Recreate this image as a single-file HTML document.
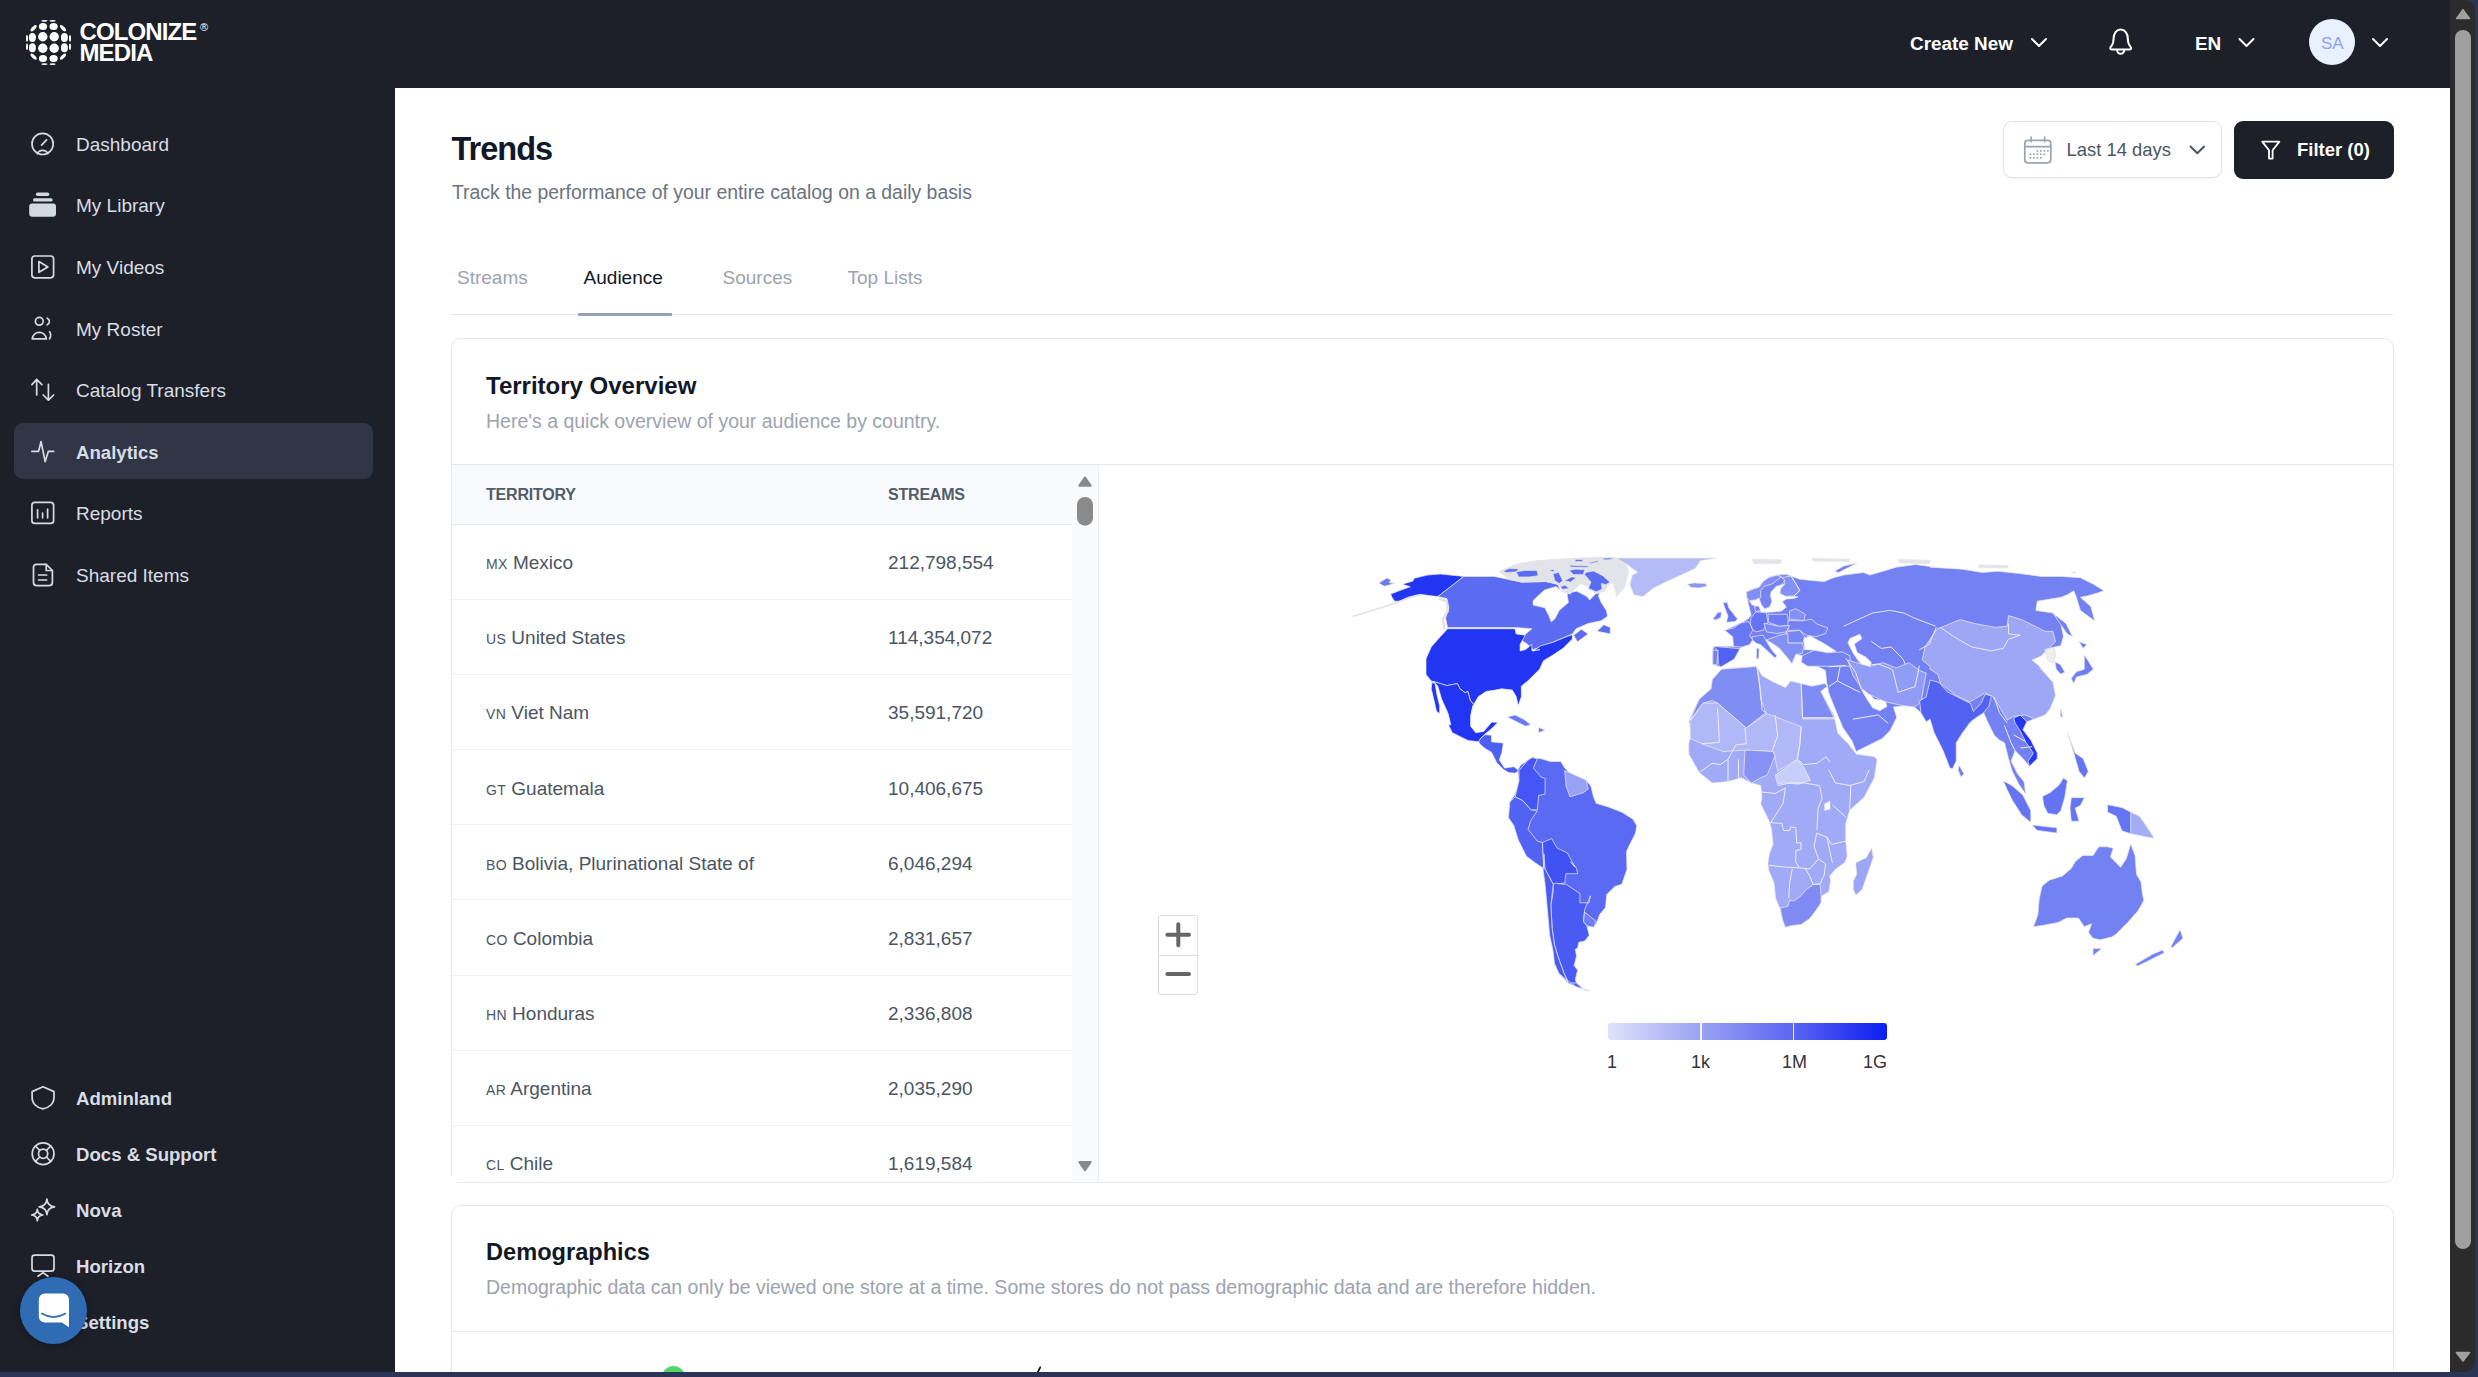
<!DOCTYPE html>
<html><head><meta charset="utf-8">
<style>
*{box-sizing:border-box;margin:0;padding:0}
html,body{width:2478px;height:1377px;overflow:hidden;background:#2a3456;font-family:"Liberation Sans",sans-serif}
.abs{position:absolute}
#app{position:absolute;left:0;top:0;width:2450px;height:1372px;background:#1d2029;overflow:hidden}
#main{position:absolute;left:395px;top:88px;width:2055px;height:1284px;background:#fff}
.nav{position:absolute;left:76px;font-size:19px;color:#d8dde6;line-height:24px;white-space:nowrap}
.nav.b{font-weight:bold;font-size:18.6px}
.ico{position:absolute;left:30px;width:26px;height:26px}
.ico svg{width:26px;height:26px;fill:none;stroke:#d6dbe3;stroke-width:1.6;stroke-linecap:round;stroke-linejoin:round}
.t{position:absolute;white-space:nowrap;line-height:1}
.tab{top:268.2px;font-size:19px;color:#9ca3af}
.tab.act{color:#111827}
.th{top:487.4px;font-size:16px;font-weight:bold;color:#515b69;letter-spacing:-0.2px}
.row{font-size:19px;color:#4b5563}
.cc{font-size:14px;letter-spacing:0.3px}
.leg{top:1053px;font-size:18px;color:#333}
</style></head><body>
<div id="app">
  <!-- logo -->
  
  <div class="t" style="left:79.5px;top:20.9px;font-size:24px;font-weight:bold;color:#fff;letter-spacing:-0.9px;line-height:21.6px">COLONIZE<br>MEDIA</div>
  <div class="t" style="left:200px;top:22px;font-size:11px;color:#fff">&#174;</div>

  
  <!-- sidebar -->
  <div class="abs" style="left:14px;top:423px;width:359px;height:56px;background:#303645;border-radius:9px"></div>
  <div class="nav" style="top:132.7px">Dashboard</div>
  <div class="nav" style="top:194.3px">My Library</div>
  <div class="nav" style="top:255.9px">My Videos</div>
  <div class="nav" style="top:317.5px">My Roster</div>
  <div class="nav" style="top:379.1px">Catalog Transfers</div>
  <div class="nav b" style="top:440.7px">Analytics</div>
  <div class="nav" style="top:502.3px">Reports</div>
  <div class="nav" style="top:563.9px">Shared Items</div>

  <div class="nav b" style="top:1086.9px">Adminland</div>
  <div class="nav b" style="top:1143.3px">Docs &amp; Support</div>
  <div class="nav b" style="top:1199.2px">Nova</div>
  <div class="nav b" style="top:1254.9px">Horizon</div>
  <div class="nav b" style="top:1310.8px">Settings</div>

<!--ICONS--><svg class="abs" style="left:0;top:0" width="395" height="1377" viewBox="0 0 395 1377">
<g fill="#fff">
<ellipse cx="44.4" cy="20.8" rx="3.2" ry="0.9"/><ellipse cx="52.6" cy="20.8" rx="3.2" ry="0.9"/>
<ellipse cx="43" cy="26.4" rx="4.1" ry="3.5"/><ellipse cx="53.6" cy="26.4" rx="4.1" ry="3.5"/>
<ellipse cx="33.6" cy="28.2" rx="4" ry="1.7" transform="rotate(-45 33.6 28.2)"/><ellipse cx="63" cy="28.2" rx="4" ry="1.7" transform="rotate(45 63 28.2)"/>
<circle cx="42.8" cy="36.8" r="4.7"/><circle cx="54.2" cy="36.8" r="4.7"/>
<ellipse cx="32.4" cy="37.4" rx="3.5" ry="4.5"/><ellipse cx="64.4" cy="37.4" rx="3.5" ry="4.5"/>
<ellipse cx="27" cy="38.4" rx="1" ry="3.3"/><ellipse cx="70" cy="38.4" rx="1" ry="3.3"/>
<circle cx="42.8" cy="48.2" r="4.7"/><circle cx="54.2" cy="48.2" r="4.7"/>
<ellipse cx="32.4" cy="47.8" rx="3.5" ry="4.5"/><ellipse cx="64.4" cy="47.8" rx="3.5" ry="4.5"/>
<ellipse cx="27" cy="46.8" rx="1" ry="3.3"/><ellipse cx="70" cy="46.8" rx="1" ry="3.3"/>
<ellipse cx="43" cy="58.4" rx="4.1" ry="3.5"/><ellipse cx="53.6" cy="58.4" rx="4.1" ry="3.5"/>
<ellipse cx="33.6" cy="56.6" rx="4" ry="1.7" transform="rotate(45 33.6 56.6)"/><ellipse cx="63" cy="56.6" rx="4" ry="1.7" transform="rotate(-45 63 56.6)"/>
<ellipse cx="44.4" cy="64.1" rx="3.2" ry="0.9"/><ellipse cx="52.6" cy="64.1" rx="3.2" ry="0.9"/>
</g>
<g fill="none" stroke="#d6dbe3" stroke-width="1.7" stroke-linecap="round" stroke-linejoin="round">
<!-- dashboard -->
<circle cx="42.6" cy="143.9" r="10.6"/>
<path d="M41.6 145.1 L46.6 139.9"/>
<path d="M37.4 153.6 A5.6 5.2 0 0 1 47.8 153.6"/>
<!-- videos -->
<rect x="31.9" y="256" width="21.7" height="21.8" rx="3"/>
<path d="M38.9 261.5 L47.9 266.9 L38.9 272.3 Z"/>
<!-- roster -->
<circle cx="39.3" cy="321.3" r="3.9"/>
<path d="M32.2 338.8 A7.2 7.6 0 0 1 46.4 338.8 Z"/>
<path d="M47.2 318.2 A3.6 3.6 0 0 1 47.2 324.8"/>
<path d="M49.6 331.6 A5.8 6.4 0 0 1 49.6 338.8"/>
<!-- transfers -->
<path d="M36.7 395 V379.6 M31.9 384.6 L36.7 379.4 L41.9 384.6"/>
<path d="M48.4 384.4 V400 M43.2 395 L48.4 400.2 L53.6 395"/>
<!-- analytics -->
<path d="M31.9 451.4 H38.6 L41 441.5 L45.2 461.6 L48.3 451.4 H53.7"/>
<!-- reports -->
<rect x="31.9" y="502.3" width="21.7" height="21.1" rx="3"/>
<path d="M37.6 509.8 V517.8 M42.6 513.2 V517.8 M47.6 509 V517.8"/>
<!-- shared -->
<path d="M36.5 564.3 H46.2 L52.4 570.5 V582.6 A3 3 0 0 1 49.4 585.6 H36.5 A3 3 0 0 1 33.5 582.6 V567.3 A3 3 0 0 1 36.5 564.3 Z"/>
<path d="M46.2 564.5 V570.5 H52.2"/>
<path d="M38.6 575 H46.6 M38.6 580 H46.6"/>
<!-- shield -->
<path d="M43 1086.8 L32.1 1091.6 V1097.5 C32.1 1103.4 36.6 1107.6 43 1108.8 C49.4 1107.6 54 1103.4 54 1097.5 V1091.6 Z"/>
<!-- lifebuoy -->
<circle cx="43.1" cy="1153.7" r="10.9"/>
<circle cx="43.1" cy="1153.7" r="4.6"/>
<path d="M35.4 1146 L39.8 1150.4 M50.8 1146 L46.4 1150.4 M35.4 1161.4 L39.8 1157 M50.8 1161.4 L46.4 1157"/>
<!-- sparkles -->
<path d="M46.9 1199.2 Q47.6 1206.2 54.6 1206.9 Q47.6 1207.6 46.9 1214.6 Q46.2 1207.6 39.2 1206.9 Q46.2 1206.2 46.9 1199.2 Z"/>
<path d="M37.3 1209.4 Q37.8 1214.5 42.9 1215 Q37.8 1215.5 37.3 1220.6 Q36.8 1215.5 31.7 1215 Q36.8 1214.5 37.3 1209.4 Z"/>
<!-- monitor -->
<rect x="32" y="1255.2" width="22" height="16" rx="2.6"/>
<path d="M38 1276.2 L43 1272.6 L48 1276.2"/>
</g>
<!-- library filled -->
<g fill="#d3d9e2">
<rect x="35.9" y="192.6" width="13.4" height="3.4" rx="1.7"/>
<rect x="33" y="198.2" width="19.6" height="3.3" rx="1.6"/>
<rect x="29.2" y="203.6" width="26.8" height="13.1" rx="3"/>
</g>
</svg>
<!--/ICONS-->
  <!-- header right -->
  <div class="t" style="left:1910px;top:34.8px;font-size:18.9px;font-weight:bold;color:#fff">Create New</div>
  <div class="t" style="left:2195px;top:34.8px;font-size:18.9px;font-weight:bold;color:#fff">EN</div>
  <div class="abs" style="left:2309px;top:19px;width:46px;height:46px;border-radius:50%;background:#e9f0fe"></div>
  <div class="t" style="left:2321px;top:35px;font-size:17px;color:#8aa3ef">SA</div>

  <!-- main -->
  <div id="main"></div>

  <div class="t" style="left:451.5px;top:133px;font-size:32.5px;font-weight:bold;color:#111827;letter-spacing:-1px">Trends</div>
  <div class="t" style="left:452px;top:182.6px;font-size:19.4px;color:#6b7280">Track the performance of your entire catalog on a daily basis</div>
  <div class="t tab" style="left:457px">Streams</div>
  <div class="t tab act" style="left:583.6px">Audience</div>
  <div class="t tab" style="left:722.5px">Sources</div>
  <div class="t tab" style="left:847.5px">Top Lists</div>
  <div class="abs" style="left:451px;top:314px;width:1942px;height:1px;background:#e5e7eb"></div>
  <div class="abs" style="left:578px;top:313px;width:94px;height:3px;background:#97a1b1;border-radius:1px"></div>
  <!-- date + filter -->
  <div class="abs" style="left:2003px;top:121px;width:219px;height:57px;border:1px solid #dfe3ea;border-radius:9px;background:#fff;box-shadow:0 1px 2px rgba(0,0,0,0.05)"></div>
  <div class="t" style="left:2066.6px;top:141.2px;font-size:18.4px;color:#4a5568">Last 14 days</div>
  <div class="abs" style="left:2234px;top:121px;width:160px;height:58px;background:#1d2029;border-radius:9px"></div>
  <div class="t" style="left:2297px;top:141.2px;font-size:18.5px;font-weight:bold;color:#fff">Filter (0)</div>
  <!-- card 1 -->
  <div class="abs" style="left:451px;top:338px;width:1943px;height:845px;border:1px solid #e5e7eb;border-radius:10px"></div>
  <div class="abs" style="left:450px;top:1168px;width:24px;height:14px;background:#fff"></div>
  <div class="abs" style="left:451px;top:1160px;width:1px;height:15.5px;background:#e5e7eb"></div>
  <div class="abs" style="left:458px;top:1182px;width:16px;height:1px;background:#e5e7eb"></div>
  <div class="t" style="left:486px;top:374.1px;font-size:24px;font-weight:bold;color:#111827">Territory Overview</div>
  <div class="t" style="left:486px;top:412.2px;font-size:19.5px;color:#9ca3af">Here's a quick overview of your audience by country.</div>
  <div class="abs" style="left:452px;top:464px;width:1941px;height:1px;background:#e5e7eb"></div>
  <div class="abs" style="left:452px;top:465px;width:646px;height:59px;background:#f9fafb"></div>
  <div class="abs" style="left:452px;top:524px;width:620px;height:1px;background:#e5e7eb"></div>
  <div class="abs" style="left:1072px;top:465px;width:26px;height:717px;background:#f9fafb"></div>
  <div class="abs" style="left:1098px;top:465px;width:1px;height:717px;background:#eceef2"></div>
  <div class="t th" style="left:486px">TERRITORY</div>
  <div class="t th" style="left:888px">STREAMS</div>
<div class="t row" style="top:553.2px;left:486px"><span class="cc">MX</span> Mexico</div><div class="t row" style="top:553.2px;left:888px">212,798,554</div>
<div class="abs" style="left:452px;top:599.0px;width:620px;height:1px;background:#eef0f3"></div>
<div class="t row" style="top:628.3px;left:486px"><span class="cc">US</span> United States</div><div class="t row" style="top:628.3px;left:888px">114,354,072</div>
<div class="abs" style="left:452px;top:674.1px;width:620px;height:1px;background:#eef0f3"></div>
<div class="t row" style="top:703.4px;left:486px"><span class="cc">VN</span> Viet Nam</div><div class="t row" style="top:703.4px;left:888px">35,591,720</div>
<div class="abs" style="left:452px;top:749.2px;width:620px;height:1px;background:#eef0f3"></div>
<div class="t row" style="top:778.5px;left:486px"><span class="cc">GT</span> Guatemala</div><div class="t row" style="top:778.5px;left:888px">10,406,675</div>
<div class="abs" style="left:452px;top:824.3px;width:620px;height:1px;background:#eef0f3"></div>
<div class="t row" style="top:853.6px;left:486px"><span class="cc">BO</span> Bolivia, Plurinational State of</div><div class="t row" style="top:853.6px;left:888px">6,046,294</div>
<div class="abs" style="left:452px;top:899.4px;width:620px;height:1px;background:#eef0f3"></div>
<div class="t row" style="top:928.7px;left:486px"><span class="cc">CO</span> Colombia</div><div class="t row" style="top:928.7px;left:888px">2,831,657</div>
<div class="abs" style="left:452px;top:974.5px;width:620px;height:1px;background:#eef0f3"></div>
<div class="t row" style="top:1003.8px;left:486px"><span class="cc">HN</span> Honduras</div><div class="t row" style="top:1003.8px;left:888px">2,336,808</div>
<div class="abs" style="left:452px;top:1049.6px;width:620px;height:1px;background:#eef0f3"></div>
<div class="t row" style="top:1078.9px;left:486px"><span class="cc">AR</span> Argentina</div><div class="t row" style="top:1078.9px;left:888px">2,035,290</div>
<div class="abs" style="left:452px;top:1124.7px;width:620px;height:1px;background:#eef0f3"></div>
<div class="t row" style="top:1154.0px;left:486px"><span class="cc">CL</span> Chile</div><div class="t row" style="top:1154.0px;left:888px">1,619,584</div>

  <!--MAP--><svg class="abs" style="left:1099px;top:465px" width="1294" height="717" viewBox="1099 465 1294 717"><path d="M1463.9,576.4L1440.4,574.0L1427.3,575.1L1414.2,578.3L1412.9,581.0L1402.4,584.2L1410.3,586.8L1401.1,590.1L1390.7,594.0L1392.0,597.3L1394.6,601.2L1399.8,601.2L1407.7,597.3L1415.5,595.3L1420.8,594.4L1427.3,595.3L1437.8,596.6Z" fill="#2135f3" stroke="#e6e6e6" stroke-width="0.7" stroke-linejoin="round"/><path d="M1378.9,582.9L1386.8,578.3L1390.7,579.6L1389.4,582.9L1394.6,582.9L1389.4,584.9L1384.1,586.2Z" fill="#6a78f2" stroke="#e6e6e6" stroke-width="0.7" stroke-linejoin="round"/><polyline points="1352.8,616.3 1368.5,611.7 1389.4,605.1 1407.7,598.6 1420.8,594.4" fill="none" stroke="#e3e3e3" stroke-width="1.6"/><path d="M1437.8,596.6L1463.9,576.4L1494.0,576.4L1509.1,579.5L1522.0,582.1L1545.8,581.5L1557.5,584.1L1560.7,591.2L1570.4,592.4L1576.8,591.2L1586.5,596.3L1589.7,600.0L1601.1,588.1L1598.5,596.0L1601.1,602.5L1606.3,610.4L1607.6,616.3L1601.1,620.8L1588.0,623.5L1576.2,628.7L1572.3,633.9L1552.7,642.4L1533.1,649.6L1527.8,644.4L1520.0,639.1L1531.9,628.7L1514.9,627.6L1447.6,627.6L1445.6,618.2L1448.9,607.8L1446.9,598.6Z" fill="#5b6cf2" stroke="#e6e6e6" stroke-width="0.7" stroke-linejoin="round"/><path d="M1499.4,571.5L1514.9,564.7L1532.9,561.1L1551.0,559.8L1570.4,558.6L1596.2,557.6L1615.6,557.6L1624.0,560.2L1628.5,571.1L1624.6,587.3L1616.9,596.3L1613.0,582.1L1608.5,585.3L1604.6,591.2L1596.2,593.7L1586.5,586.0L1580.7,583.4L1570.4,593.7L1563.9,591.2L1557.5,584.1L1545.8,581.5L1522.0,582.1L1509.1,579.5Z" fill="#e3e4ea" stroke="#e6e6e6" stroke-width="1.0" stroke-linejoin="round"/><path d="M1503.2,571.1L1509.1,568.6L1518.7,568.9L1516.2,571.8L1505.8,572.4Z" fill="#5b6cf2" stroke="#e6e6e6" stroke-width="0.6" stroke-linejoin="round"/><path d="M1516.2,571.8L1525.2,570.5L1536.8,570.5L1538.1,575.7L1529.1,576.9L1518.7,576.9Z" fill="#5b6cf2" stroke="#e6e6e6" stroke-width="0.6" stroke-linejoin="round"/><path d="M1553.0,573.7L1558.8,572.4L1562.6,580.8L1559.4,583.4L1554.9,580.8Z" fill="#5b6cf2" stroke="#e6e6e6" stroke-width="0.6" stroke-linejoin="round"/><path d="M1560.7,586.6L1565.2,585.3L1569.1,588.6L1562.0,589.2Z" fill="#5b6cf2" stroke="#e6e6e6" stroke-width="0.6" stroke-linejoin="round"/><path d="M1569.1,570.5L1575.5,569.2L1584.6,569.8L1583.3,574.4L1573.6,574.4Z" fill="#5b6cf2" stroke="#e6e6e6" stroke-width="0.6" stroke-linejoin="round"/><path d="M1585.9,572.4L1593.6,571.1L1602.7,575.7L1609.8,582.1L1605.9,584.7L1601.4,583.4L1602.0,589.2L1596.2,591.8L1588.5,588.6L1591.0,582.1L1584.6,574.4Z" fill="#5b6cf2" stroke="#e6e6e6" stroke-width="0.6" stroke-linejoin="round"/><path d="M1564.6,580.8L1571.7,576.9L1576.2,577.6L1570.4,582.1Z" fill="#5b6cf2" stroke="#e6e6e6" stroke-width="0.6" stroke-linejoin="round"/><path d="M1574.9,559.5L1583.3,559.8L1582.0,561.5L1575.5,561.5Z" fill="#5b6cf2" stroke="#e6e6e6" stroke-width="0.6" stroke-linejoin="round"/><path d="M1589.1,562.7L1598.8,560.5L1597.5,562.1L1589.7,563.7Z" fill="#5b6cf2" stroke="#e6e6e6" stroke-width="0.6" stroke-linejoin="round"/><path d="M1602.7,558.2L1614.3,557.9L1609.1,559.8L1604.0,559.8Z" fill="#5b6cf2" stroke="#e6e6e6" stroke-width="0.6" stroke-linejoin="round"/><path d="M1569.7,565.3L1588.5,566.0L1587.2,567.3L1570.4,566.9Z" fill="#5b6cf2" stroke="#e6e6e6" stroke-width="0.6" stroke-linejoin="round"/><path d="M1549.1,570.5L1554.2,569.2L1553.6,571.8Z" fill="#5b6cf2" stroke="#e6e6e6" stroke-width="0.6" stroke-linejoin="round"/><polyline points="1438.9,598.4 1446.9,601.7 1447.8,611.3 1442.9,618.6 1444.5,629.9" fill="none" stroke="#e2e2e2" stroke-width="2.2"/><path d="M1533.1,601.2L1533.6,600.0L1544.6,589.9L1556.2,586.6L1561.3,591.2L1570.4,593.7L1567.1,593.4L1568.4,602.5L1559.2,610.4L1555.3,618.2L1551.4,622.1L1548.8,615.6L1544.8,607.8L1533.1,605.1Z" fill="#ffffff" stroke="#e8e8e8" stroke-width="0.7" stroke-linejoin="round"/><path d="M1597.1,631.3L1603.7,624.8L1610.2,627.4L1610.2,633.9L1603.7,632.6Z" fill="#5b6cf2" stroke="#e6e6e6" stroke-width="0.7" stroke-linejoin="round"/><path d="M1573.6,635.2L1581.5,629.3L1588.0,633.9L1577.5,641.8Z" fill="#5b6cf2" stroke="#e6e6e6" stroke-width="0.7" stroke-linejoin="round"/><path d="M1447.6,628.7L1514.9,628.7L1516.2,633.9L1525.4,635.2L1520.1,644.4L1520.1,650.9L1525.4,649.6L1531.9,644.4L1531.9,650.9L1540.0,649.6L1533.1,650.9L1540.9,645.7L1552.7,642.4L1563.1,638.1L1572.3,634.6L1572.3,639.1L1563.1,648.3L1551.4,656.1L1543.5,660.7L1539.6,669.2L1527.8,681.0L1521.3,686.2L1521.4,696.7L1518.2,705.8L1516.2,696.7L1512.3,690.1L1501.8,688.8L1495.3,690.1L1486.1,691.4L1478.3,696.7L1473.7,704.5L1470.4,700.6L1467.8,691.4L1465.2,692.8L1460.0,688.8L1457.4,683.6L1446.9,685.6L1440.4,683.6L1433.8,681.6L1431.2,681.0L1426.0,674.4L1426.0,658.8L1431.2,647.0L1440.4,636.5Z" fill="#2135f3" stroke="#f0f0f0" stroke-width="0.7" stroke-linejoin="round"/><path d="M1433.8,681.6L1440.4,683.6L1446.9,685.6L1457.4,683.6L1460.0,688.8L1465.2,692.8L1467.8,691.4L1470.4,700.6L1473.7,704.5L1471.7,712.4L1473.2,705.2L1470.6,715.7L1470.6,726.2L1475.8,732.7L1483.7,731.4L1491.5,722.2L1498.1,722.2L1491.5,728.8L1485.0,734.0L1481.1,737.9L1478.5,741.8L1468.0,740.5L1452.3,732.7L1448.4,724.8L1450.8,725.0L1448.2,713.7L1441.7,699.3L1437.8,686.2Z" fill="#2135f3" stroke="#f0f0f0" stroke-width="0.7" stroke-linejoin="round"/><path d="M1431.9,682.3L1435.1,683.6L1437.1,695.4L1439.7,705.8L1439.7,713.7L1436.4,711.1L1433.8,699.3L1431.2,688.8Z" fill="#2135f3" stroke="#f0f0f0" stroke-width="0.7" stroke-linejoin="round"/><path d="M1478.5,741.8L1481.1,737.9L1485.0,734.6L1491.5,735.3L1491.5,741.8L1503.3,743.1L1502.0,752.3L1499.4,760.1L1504.6,768.0L1513.8,766.7L1519.0,770.6L1515.1,773.2L1508.5,772.6L1503.3,769.3L1496.8,762.8L1491.5,752.3L1485.0,748.4L1480.4,744.5Z" fill="#4d5ef3" stroke="#f0f0f0" stroke-width="0.7" stroke-linejoin="round"/><path d="M1507.2,717.0L1515.1,715.0L1524.2,719.6L1530.8,724.8L1525.5,726.2L1515.1,720.9Z" fill="#6a79f2" stroke="#e6e6e6" stroke-width="0.7" stroke-linejoin="round"/><path d="M1538.6,727.5L1545.1,730.1L1538.6,732.7Z" fill="#6a79f2" stroke="#e6e6e6" stroke-width="0.7" stroke-linejoin="round"/><path d="M1616.8,558.1L1716.1,558.1L1700.4,560.7L1695.2,568.5L1680.8,575.1L1663.8,582.9L1653.4,588.1L1642.9,596.6L1633.8,594.7L1629.8,584.2L1632.4,575.1L1637.7,572.5L1627.2,564.6Z" fill="#b3bcf7" stroke="#e6e6e6" stroke-width="0.7" stroke-linejoin="round"/><path d="M1687.4,584.2L1693.9,582.9L1705.7,583.6L1707.0,586.2L1699.1,588.1L1691.3,587.5Z" fill="#8a97f4" stroke="#e6e6e6" stroke-width="0.7" stroke-linejoin="round"/><path d="M1517.7,770.6L1520.3,765.4L1528.1,760.1L1532.1,757.5L1541.2,758.8L1550.4,761.5L1560.8,761.5L1564.7,768.0L1570.0,773.2L1576.5,778.5L1585.7,779.8L1590.9,786.3L1593.5,796.8L1596.1,803.3L1609.2,807.2L1622.3,812.4L1632.7,819.0L1636.7,825.5L1635.4,833.4L1630.1,843.8L1626.4,851.6L1627.0,869.1L1621.8,884.2L1614.8,886.5L1606.7,894.6L1605.5,907.4L1599.7,914.4L1596.2,923.7L1593.9,927.2L1586.9,926.0L1589.2,935.3L1584.6,941.1L1578.8,942.3L1577.6,948.1L1575.3,949.2L1576.5,956.2L1574.1,965.5L1577.6,970.2L1575.3,979.5L1576.5,982.9L1584.6,989.9L1590.4,991.1L1575.3,986.4L1568.3,982.9L1559.0,973.6L1554.4,963.2L1553.2,951.6L1549.7,935.3L1547.4,909.7L1545.1,884.2L1542.8,867.9L1535.8,863.2L1526.5,856.3L1518.3,840.0L1513.8,825.5L1508.5,817.7L1509.8,802.0L1515.1,794.1L1519.0,781.1Z" fill="#5a6af3" stroke="#e6e6e6" stroke-width="0.7" stroke-linejoin="round"/><path d="M1519.0,770.6L1528.1,760.1L1532.1,757.5L1537.3,758.8L1533.4,768.0L1541.2,777.1L1545.1,778.5L1545.1,794.1L1538.6,795.4L1537.3,809.8L1530.8,809.8L1522.9,800.7L1515.1,796.8L1519.0,781.1Z" fill="#4457f4" stroke="#f0f0f0" stroke-width="0.7" stroke-linejoin="round"/><path d="M1515.1,796.8L1522.9,800.7L1530.8,809.8L1537.3,811.1L1530.8,820.3L1528.1,829.4L1537.3,841.2L1542.5,842.5L1543.8,867.4L1542.8,867.9L1535.8,863.2L1526.5,856.3L1518.3,840.0L1513.8,825.5L1508.5,817.7L1509.8,802.0Z" fill="#5262f3" stroke="#f0f0f0" stroke-width="0.7" stroke-linejoin="round"/><path d="M1542.5,842.5L1551.7,838.6L1556.9,847.8L1567.4,853.0L1575.2,867.4L1570.6,862.1L1576.5,867.9L1577.6,873.7L1566.0,873.7L1564.8,883.0L1553.2,884.2L1545.1,869.1L1543.9,853.9L1543.8,867.4Z" fill="#4152f4" stroke="#f0f0f0" stroke-width="0.7" stroke-linejoin="round"/><path d="M1553.2,884.2L1555.5,883.0L1561.3,884.2L1566.0,884.2L1579.9,893.5L1579.9,902.8L1589.2,902.8L1590.4,895.8L1584.6,909.7L1583.4,921.3L1586.9,926.0L1589.2,935.3L1584.6,941.1L1578.8,942.3L1577.6,948.1L1575.3,949.2L1576.5,956.2L1574.1,965.5L1577.6,970.2L1575.3,979.5L1576.5,982.9L1568.3,982.9L1563.7,972.5L1557.9,956.2L1554.4,944.6L1552.1,928.3L1550.9,905.1L1553.2,892.3Z" fill="#4a5bf4" stroke="#f0f0f0" stroke-width="0.7" stroke-linejoin="round"/><path d="M1545.1,869.1L1553.2,884.2L1550.9,905.1L1552.1,928.3L1554.4,944.6L1557.9,956.2L1563.7,972.5L1568.3,982.9L1575.3,986.4L1559.0,973.6L1554.4,963.2L1553.2,951.6L1549.7,935.3L1547.4,909.7L1545.1,884.2L1542.8,867.9Z" fill="#4a5bf4" stroke="#f0f0f0" stroke-width="0.7" stroke-linejoin="round"/><path d="M1584.6,912.1L1596.2,921.3L1593.9,927.2L1586.9,926.0L1583.4,921.3Z" fill="#7080f3" stroke="#f0f0f0" stroke-width="0.7" stroke-linejoin="round"/><path d="M1564.7,770.6L1585.7,779.8L1588.3,788.9L1583.1,792.8L1570.0,796.8L1566.1,786.3Z" fill="#97a2f5" stroke="#f0f0f0" stroke-width="0.7" stroke-linejoin="round"/><path d="M1824.2,581.6L1833.4,577.7L1843.8,575.1L1863.4,572.5L1870.0,575.1L1883.1,571.2L1896.1,567.2L1915.7,564.6L1935.4,567.2L1930.0,567.2L1962.7,569.2L1982.3,572.5L1998.0,571.2L2021.5,573.8L2041.1,576.4L2060.8,576.4L2080.4,577.7L2093.4,584.2L2103.9,590.8L2096.1,593.4L2086.9,596.0L2080.4,597.3L2090.8,606.5L2094.7,620.8L2080.4,610.4L2076.4,597.3L2073.8,590.8L2067.3,594.7L2060.8,597.3L2037.2,601.2L2035.9,610.4L2052.9,613.0L2060.8,623.5L2063.4,636.5L2060.8,645.7L2054.2,647.0L2055.5,656.1L2052.9,662.7L2047.7,660.1L2045.1,649.6L2041.1,656.1L2032.0,660.1L2038.5,665.3L2042.4,670.5L2052.9,682.3L2055.5,695.4L2050.3,708.4L2045.1,715.0L2034.6,718.9L2026.8,721.8L2022.9,729.7L2030.8,740.1L2037.3,753.2L2037.3,758.5L2029.4,766.3L2022.9,758.5L2015.1,750.6L2011.1,761.1L2017.7,774.1L2024.2,782.0L2025.5,793.8L2019.0,784.6L2012.4,771.5L2008.5,758.5L2004.6,742.8L1999.4,740.1L1994.1,734.9L1987.6,721.8L1983.7,712.7L1975.8,717.9L1970.6,721.8L1962.8,732.3L1956.2,742.8L1956.2,761.1L1952.3,768.9L1949.7,767.6L1943.1,750.6L1934.0,732.3L1930.1,719.2L1926.2,721.8L1920.9,712.7L1914.4,707.1L1904.0,705.8L1893.5,707.1L1896.7,717.5L1890.1,730.6L1882.3,738.5L1866.6,746.3L1856.1,751.5L1852.2,741.1L1843.1,728.0L1836.5,712.3L1828.7,692.7L1827.4,684.8L1826.8,683.6L1825.5,670.5L1817.4,666.5L1807.8,666.2L1801.4,662.2L1802.2,655.8L1795.8,654.2L1791.9,663.8L1787.9,658.2L1779.1,647.9L1771.9,643.1L1766.3,639.9L1771.9,650.3L1776.7,655.8L1775.1,658.2L1768.7,651.9L1760.7,644.7L1755.9,643.1L1752.7,639.9L1749.5,644.7L1741.5,647.1L1739.9,648.7L1734.3,659.0L1720.8,667.0L1712.8,664.6L1712.8,650.3L1713.6,646.3L1733.5,646.3L1732.7,636.7L1724.8,630.3L1731.9,627.1L1740.7,623.1L1747.9,619.1L1751.1,615.1L1747.1,598.3L1746.3,591.9L1751.9,589.6L1759.1,587.2L1763.1,581.6L1768.7,577.6L1776.7,575.2L1786.3,574.4L1791.1,576.0L1799.8,579.2L1814.2,580.8Z" fill="#7381f3" stroke="#e6e6e6" stroke-width="0.7" stroke-linejoin="round"/><path d="M1834.7,571.2L1843.8,565.9L1856.9,563.3L1846.4,568.5L1838.6,572.5Z" fill="#7381f3" stroke="#e0e0e0" stroke-width="0.7" stroke-linejoin="round"/><path d="M1752.3,559.2L1782.0,559.9L1780.6,563.4L1753.7,563.7Z" fill="#e2e3ea" stroke="#e6e6e6" stroke-width="0.8" stroke-linejoin="round"/><path d="M1811.8,558.5L1850.0,559.2L1848.6,561.4L1813.2,561.0Z" fill="#e2e3ea" stroke="#e6e6e6" stroke-width="0.8" stroke-linejoin="round"/><path d="M1898.2,559.2L1930.7,560.6L1929.3,563.7L1899.6,562.8Z" fill="#e2e3ea" stroke="#e6e6e6" stroke-width="0.8" stroke-linejoin="round"/><path d="M1978.4,564.9L2008.5,565.7L2007.1,568.0L1979.7,567.6Z" fill="#e2e3ea" stroke="#e6e6e6" stroke-width="0.8" stroke-linejoin="round"/><path d="M2071.2,571.8L2075.8,572.2L2074.5,573.8Z" fill="#e2e3ea" stroke="#e6e6e6" stroke-width="0.8" stroke-linejoin="round"/><path d="M1749.5,600.7L1755.1,599.9L1759.1,598.3L1761.5,604.7L1764.7,608.7L1769.5,607.1L1771.9,601.5L1770.3,595.9L1771.1,591.9L1776.7,586.4L1784.7,584.0L1780.7,588.8L1779.9,593.5L1785.5,596.3L1798.2,596.7L1794.2,598.3L1786.3,599.1L1782.3,601.5L1786.3,607.1L1781.5,611.1L1767.9,612.3L1761.5,611.9L1759.1,609.9L1755.9,606.3L1751.9,604.7Z" fill="#ffffff" stroke="#ececec" stroke-width="0.7" stroke-linejoin="round"/><path d="M1803.8,638.3L1810.2,635.9L1815.8,639.1L1824.6,643.9L1835.8,651.1L1827.8,652.7L1815.8,650.3L1804.6,649.5Z" fill="#ffffff" stroke="#ececec" stroke-width="0.7" stroke-linejoin="round"/><path d="M1850.0,638.5L1859.9,634.2L1862.0,638.5L1854.3,644.1L1857.1,652.6L1865.6,656.9L1871.3,662.5L1869.8,666.8L1864.2,666.8L1858.5,661.1L1852.8,652.6L1847.9,642.7Z" fill="#ffffff" stroke="#ececec" stroke-width="0.7" stroke-linejoin="round"/><path d="M1861.3,689.4L1868.4,692.3L1874.1,699.3L1885.4,700.8L1886.8,706.4L1879.7,710.7L1872.7,707.8L1867.0,699.3Z" fill="#ffffff" stroke="#ececec" stroke-width="0.7" stroke-linejoin="round"/><path d="M1747.1,598.3L1746.3,591.9L1751.9,589.6L1759.1,587.2L1763.1,581.6L1768.7,577.6L1776.7,575.2L1786.3,574.4L1791.1,576.0L1784.7,580.0L1781.5,584.8L1775.9,586.4L1771.1,591.9L1770.3,595.9L1771.9,601.5L1769.5,607.1L1764.7,608.7L1761.5,604.7L1759.1,598.3L1755.1,599.9L1749.5,600.7Z" fill="#7684f3" stroke="#e8e8e8" stroke-width="0.7" stroke-linejoin="round"/><path d="M1747.1,598.3L1746.3,591.9L1751.9,589.6L1759.1,587.2L1763.1,581.6L1768.7,577.6L1776.7,575.2L1781.5,576.8L1771.9,584.0L1763.9,586.4L1760.7,590.4L1760.7,597.5L1759.1,598.3L1755.1,599.9L1749.5,600.7Z" fill="#838ff4" stroke="#f0f0f0" stroke-width="0.7" stroke-linejoin="round"/><path d="M1781.5,577.6L1791.1,576.0L1795.0,582.4L1799.8,590.4L1794.2,595.9L1785.5,596.3L1779.9,593.5L1780.7,588.8L1784.7,584.0L1784.7,580.0Z" fill="#8390f4" stroke="#f0f0f0" stroke-width="0.7" stroke-linejoin="round"/><path d="M1754.3,607.1L1758.3,605.5L1760.7,610.3L1755.9,611.9Z" fill="#6f7ef2" stroke="#f0f0f0" stroke-width="0.7" stroke-linejoin="round"/><path d="M1723.2,603.1L1727.2,602.3L1728.8,607.9L1737.5,619.1L1735.1,621.5L1726.4,622.3L1728.0,615.9L1724.8,607.9Z" fill="#6676f2" stroke="#e6e6e6" stroke-width="0.7" stroke-linejoin="round"/><path d="M1712.8,619.1L1717.6,612.7L1721.6,611.9L1720.8,617.5L1716.0,619.9Z" fill="#7080f3" stroke="#e6e6e6" stroke-width="0.7" stroke-linejoin="round"/><path d="M1724.8,630.3L1733.5,627.9L1740.7,623.1L1747.9,621.5L1750.3,623.9L1752.7,630.3L1749.5,635.9L1752.7,639.9L1749.5,644.7L1741.5,647.1L1733.5,646.3L1732.7,636.7Z" fill="#6878f2" stroke="#f0f0f0" stroke-width="0.7" stroke-linejoin="round"/><path d="M1751.1,617.5L1755.9,611.9L1766.3,612.7L1767.9,622.3L1765.5,626.3L1763.1,630.3L1755.9,631.9L1752.7,629.5L1750.3,623.9Z" fill="#6474f2" stroke="#f0f0f0" stroke-width="0.7" stroke-linejoin="round"/><path d="M1767.9,614.3L1787.1,614.3L1789.5,625.5L1779.1,626.3L1768.7,622.3Z" fill="#6d7cf2" stroke="#f0f0f0" stroke-width="0.7" stroke-linejoin="round"/><path d="M1789.5,611.1L1795.8,608.7L1805.4,614.3L1803.8,620.7L1789.5,619.1Z" fill="#8390f4" stroke="#f0f0f0" stroke-width="0.7" stroke-linejoin="round"/><path d="M1787.9,620.7L1803.8,620.7L1811.8,619.1L1816.6,623.9L1827.8,627.9L1825.4,633.5L1815.8,636.7L1806.2,635.1L1799.8,630.3L1787.9,630.3Z" fill="#7381f3" stroke="#f0f0f0" stroke-width="0.7" stroke-linejoin="round"/><path d="M1786.3,631.9L1799.8,630.3L1804.6,636.7L1803.0,643.1L1787.9,643.1Z" fill="#7886f3" stroke="#f0f0f0" stroke-width="0.7" stroke-linejoin="round"/><path d="M1766.3,639.9L1779.9,635.1L1787.9,633.5L1787.9,643.1L1802.2,643.1L1803.8,647.9L1802.2,653.5L1795.8,654.2L1791.9,663.8L1787.9,658.2L1779.1,647.9L1771.9,643.1Z" fill="#8390f4" stroke="#f0f0f0" stroke-width="0.7" stroke-linejoin="round"/><path d="M1763.9,623.1L1779.1,626.3L1789.5,625.5L1786.3,631.9L1776.7,633.5L1766.3,631.9Z" fill="#7d8bf3" stroke="#f0f0f0" stroke-width="0.7" stroke-linejoin="round"/><path d="M1751.9,636.7L1763.1,635.1L1765.5,639.9L1771.9,650.3L1776.7,655.8L1775.1,658.2L1768.7,651.9L1760.7,644.7L1755.9,643.1L1752.7,639.9Z" fill="#6e7df2" stroke="#f0f0f0" stroke-width="0.7" stroke-linejoin="round"/><path d="M1713.6,646.3L1739.9,648.7L1734.3,659.0L1720.8,667.0L1718.4,664.6L1717.6,650.3Z" fill="#5262f2" stroke="#f0f0f0" stroke-width="0.7" stroke-linejoin="round"/><path d="M1712.8,650.3L1718.0,650.3L1716.8,664.6L1712.8,664.6Z" fill="#7080f3" stroke="#f0f0f0" stroke-width="0.7" stroke-linejoin="round"/><path d="M1756.7,647.9L1759.1,648.7L1758.7,659.0L1756.3,658.2Z" fill="#6e7df2" stroke="#e6e6e6" stroke-width="0.7" stroke-linejoin="round"/><path d="M1802.2,655.8L1814.2,650.3L1827.8,652.7L1842.2,651.9L1850.0,655.8L1850.0,666.2L1827.8,666.2L1807.8,666.2L1801.4,662.2Z" fill="#7381f3" stroke="#f0f0f0" stroke-width="0.7" stroke-linejoin="round"/><path d="M1847.8,660.1L1870.0,666.6L1883.1,662.7L1896.1,667.9L1909.2,662.7L1919.7,670.5L1926.2,673.1L1921.0,701.9L1914.4,707.1L1904.0,705.8L1885.7,701.9L1868.7,694.1L1862.1,688.8L1853.0,675.8Z" fill="#909cf5" stroke="#f0f0f0" stroke-width="0.7" stroke-linejoin="round"/><polyline points="1843.8,626.1 1872.6,613.0 1889.6,610.4 1904.0,613.0 1914.4,618.2 1935.4,626.1" fill="none" stroke="#f0f0f0" stroke-width="0.9"/><path d="M1937.8,628.7L1960.1,619.5L1974.5,623.5L1995.4,627.4L2007.1,626.1L2008.5,615.6L2021.5,619.5L2045.1,631.3L2052.9,631.3L2055.5,641.8L2047.7,649.6L2041.1,656.1L2032.0,660.1L2038.5,665.3L2042.4,670.5L2052.9,682.3L2055.5,695.4L2050.3,708.4L2045.1,715.0L2034.6,718.9L2025.4,715.0L2013.7,716.3L2007.1,720.2L1998.0,704.5L1992.8,696.7L1984.9,692.8L1974.5,699.3L1969.2,701.9L1956.2,695.4L1940.5,683.6L1937.8,674.4L1930.0,669.2L1930.1,666.6L1922.3,660.1L1924.9,647.0L1935.4,631.3Z" fill="#9da7f6" stroke="#f0f0f0" stroke-width="0.7" stroke-linejoin="round"/><polyline points="1940.5,627.4 1953.5,636.5 1971.8,647.0 1991.5,650.9 2003.2,648.3 2008.5,639.1 2020.2,635.2 2008.5,633.9 2008.5,623.5" fill="none" stroke="#f0f0f0" stroke-width="0.9"/><path d="M2045.1,649.6L2054.2,647.0L2055.5,656.1L2052.9,662.7L2047.7,660.1Z" fill="#eeeeee" stroke="#e4e4e4" stroke-width="0.7" stroke-linejoin="round"/><path d="M2054.9,661.7L2060.5,664.8L2064.8,672.2L2060.5,674.1L2056.2,669.1Z" fill="#6f7ef2" stroke="#e4e4e4" stroke-width="0.7" stroke-linejoin="round"/><path d="M2084.3,654.8L2093.4,669.2L2086.9,674.4L2076.4,677.1L2073.8,683.6L2071.2,678.4L2076.4,671.8L2084.3,669.2Z" fill="#6f7ef2" stroke="#e6e6e6" stroke-width="0.7" stroke-linejoin="round"/><path d="M2079.1,641.8L2086.9,644.4L2083.0,648.3Z" fill="#6f7ef2" stroke="#e6e6e6" stroke-width="0.7" stroke-linejoin="round"/><path d="M2054.2,614.3L2066.0,623.5L2072.5,636.5L2067.3,633.9L2058.1,620.8Z" fill="#7381f3" stroke="#e6e6e6" stroke-width="0.7" stroke-linejoin="round"/><path d="M2060.8,708.4L2062.7,717.6L2060.1,716.3Z" fill="#8a97f4" stroke="#e6e6e6" stroke-width="0.7" stroke-linejoin="round"/><path d="M1930.1,680.0L1939.2,682.6L1947.1,691.8L1970.6,703.5L1973.2,711.4L1981.1,703.5L1985.0,694.4L1991.5,695.7L1988.9,706.2L1983.7,712.7L1975.8,717.9L1970.6,721.8L1962.8,732.3L1956.2,742.8L1956.2,761.1L1952.3,768.9L1949.7,767.6L1943.1,750.6L1934.0,732.3L1930.1,719.2L1926.2,721.8L1920.9,712.7L1919.6,700.9L1926.2,697.0Z" fill="#5263f2" stroke="#f0f0f0" stroke-width="0.7" stroke-linejoin="round"/><path d="M1958.8,765.0L1964.1,774.1L1960.8,776.8L1958.2,770.2Z" fill="#7080f3" stroke="#e6e6e6" stroke-width="0.7" stroke-linejoin="round"/><path d="M2013.8,717.9L2020.3,715.3L2026.8,721.8L2022.9,729.7L2030.8,740.1L2037.3,753.2L2037.3,758.5L2029.4,766.3L2028.1,761.1L2033.4,753.2L2025.5,741.5L2020.3,731.0L2015.1,723.1Z" fill="#2337f5" stroke="#f0f0f0" stroke-width="0.7" stroke-linejoin="round"/><path d="M2003.3,780.7L2012.4,785.9L2022.9,795.1L2030.8,810.8L2030.8,822.5L2021.6,814.7L2012.4,800.3L2007.2,789.8Z" fill="#6474f2" stroke="#e6e6e6" stroke-width="0.7" stroke-linejoin="round"/><path d="M2032.1,825.1L2056.9,827.8L2056.9,833.0L2037.3,830.4Z" fill="#6474f2" stroke="#e6e6e6" stroke-width="0.7" stroke-linejoin="round"/><path d="M2042.5,796.4L2050.4,792.4L2059.5,784.6L2063.4,778.1L2067.4,780.7L2064.7,797.7L2060.8,810.8L2056.9,814.7L2047.8,813.4L2043.8,805.5Z" fill="#6474f2" stroke="#e6e6e6" stroke-width="0.7" stroke-linejoin="round"/><path d="M2071.3,797.7L2084.4,797.7L2080.4,805.5L2075.2,808.1L2079.1,821.2L2071.3,821.2L2070.0,808.1Z" fill="#6474f2" stroke="#e6e6e6" stroke-width="0.7" stroke-linejoin="round"/><path d="M2067.4,732.3L2071.3,742.8L2075.2,753.2L2083.1,758.5L2088.3,771.5L2084.4,778.1L2079.1,771.5L2073.9,753.2Z" fill="#6474f2" stroke="#e6e6e6" stroke-width="0.7" stroke-linejoin="round"/><path d="M2107.5,804.7L2122.0,807.6L2130.7,812.0L2139.5,816.3L2146.7,826.5L2154.0,838.1L2145.3,836.7L2130.7,833.7L2122.0,830.8L2116.2,816.3L2107.5,812.0Z" fill="#6474f2" stroke="#e6e6e6" stroke-width="0.7" stroke-linejoin="round"/><path d="M2130.7,812.0L2139.5,816.3L2146.7,826.5L2154.0,838.1L2145.3,836.7L2130.7,833.7Z" fill="#a3adf6" stroke="#f0f0f0" stroke-width="0.7" stroke-linejoin="round"/><path d="M1721.5,669.2L1733.2,667.8L1756.8,666.5L1762.0,675.7L1773.8,682.2L1785.5,687.5L1790.8,680.9L1801.2,683.5L1811.7,686.2L1824.7,683.5L1827.4,686.2L1820.8,691.4L1833.9,714.9L1837.8,733.2L1848.3,743.7L1856.1,754.1L1874.4,756.8L1877.1,759.4L1874.4,777.7L1864.0,797.3L1849.6,810.4L1845.7,823.4L1845.7,840.0L1847.2,856.6L1844.6,862.7L1835.9,868.8L1829.8,875.8L1830.6,881.0L1828.9,891.5L1821.9,895.8L1821.0,902.8L1815.8,910.6L1809.7,918.5L1801.0,924.6L1792.3,925.4L1785.3,927.2L1782.7,920.2L1780.1,908.9L1775.7,898.4L1774.0,882.7L1768.8,870.5L1767.9,863.6L1769.6,853.1L1773.1,844.4L1771.4,828.7L1768.8,820.0L1767.2,816.9L1760.7,803.8L1762.0,797.3L1760.7,785.5L1751.5,782.9L1741.1,777.7L1728.0,781.6L1712.3,782.9L1699.2,772.4L1688.8,754.1L1688.8,743.7L1691.4,733.2L1688.8,721.5L1692.7,712.3L1699.2,699.2L1711.0,688.8L1712.3,679.6Z" fill="#a0aaf6" stroke="#e6e6e6" stroke-width="0.7" stroke-linejoin="round"/><path d="M1721.5,669.2L1756.8,666.5L1759.4,680.9L1760.7,699.2L1765.9,712.3L1746.3,728.0L1717.5,703.1L1712.3,700.5L1703.1,703.1L1690.1,720.1L1699.2,699.2L1711.0,688.8L1712.3,679.6Z" fill="#808ef3" stroke="#f0f0f0" stroke-width="0.7" stroke-linejoin="round"/><path d="M1801.2,683.5L1811.7,686.2L1824.7,683.5L1827.4,686.2L1820.8,691.4L1833.9,717.5L1802.5,717.5Z" fill="#7e8cf3" stroke="#f0f0f0" stroke-width="0.7" stroke-linejoin="round"/><path d="M1690.1,721.5L1703.1,703.1L1717.5,703.1L1746.3,728.0L1767.2,713.6L1801.2,726.7L1799.9,743.7L1797.3,759.4L1777.7,771.1L1773.8,751.5L1745.0,750.2L1722.8,751.5L1701.8,743.7L1690.1,738.5Z" fill="#b0b8f7" stroke="#f0f0f0" stroke-width="0.7" stroke-linejoin="round"/><path d="M1775.1,775.1L1790.8,764.6L1797.3,759.4L1803.8,767.2L1810.4,780.3L1798.6,784.2L1784.2,782.9L1777.7,784.2Z" fill="#c8cefa" stroke="#f0f0f0" stroke-width="0.7" stroke-linejoin="round"/><path d="M1745.0,750.2L1751.5,750.2L1772.4,751.5L1775.1,755.4L1767.2,775.1L1760.7,777.7L1751.5,782.9L1743.7,775.1Z" fill="#8692f4" stroke="#f0f0f0" stroke-width="0.7" stroke-linejoin="round"/><path d="M1780.1,908.0L1787.9,906.3L1789.7,900.2L1794.0,901.0L1801.0,895.8L1806.2,889.7L1813.2,884.5L1820.2,884.5L1821.0,894.9L1821.0,902.8L1815.8,910.6L1809.7,918.5L1801.0,924.6L1792.3,925.4L1785.3,927.2L1782.7,920.2Z" fill="#808cf3" stroke="#f0f0f0" stroke-width="0.7" stroke-linejoin="round"/><path d="M1855.9,862.7L1866.4,857.5L1871.6,847.9L1873.3,857.5L1862.0,889.7L1855.9,894.9L1853.3,889.7L1853.3,881.0L1856.8,874.0L1855.9,866.2Z" fill="#9ca6f5" stroke="#e6e6e6" stroke-width="0.7" stroke-linejoin="round"/><path d="M1824.7,803.8L1830.0,801.2L1830.0,809.1L1824.7,810.4Z" fill="#ffffff" stroke="#e8e8e8" stroke-width="0.7" stroke-linejoin="round"/><polyline points="1717.5,708.4 1719.5,742.4 1701.8,743.7" fill="none" stroke="#eeeeee" stroke-width="1.0"/><polyline points="1756.8,666.5 1760.7,692.7 1762.0,709.7 1767.2,713.6" fill="none" stroke="#eeeeee" stroke-width="1.0"/><polyline points="1801.2,683.5 1802.5,717.5" fill="none" stroke="#eeeeee" stroke-width="1.0"/><polyline points="1802.5,718.8 1835.2,718.8" fill="none" stroke="#eeeeee" stroke-width="1.0"/><polyline points="1801.2,726.7 1799.9,743.7 1797.3,759.4" fill="none" stroke="#eeeeee" stroke-width="1.0"/><polyline points="1775.1,714.9 1777.7,735.8 1772.4,750.2" fill="none" stroke="#eeeeee" stroke-width="1.0"/><polyline points="1745.0,728.0 1746.3,743.7 1735.8,745.0" fill="none" stroke="#eeeeee" stroke-width="1.0"/><polyline points="1797.3,759.4 1803.8,764.6 1816.9,763.3 1826.1,756.8 1830.0,762.0" fill="none" stroke="#eeeeee" stroke-width="1.0"/><polyline points="1828.7,769.8 1835.2,782.9 1849.6,785.5 1864.0,781.6 1869.2,769.8" fill="none" stroke="#eeeeee" stroke-width="1.0"/><polyline points="1777.7,785.5 1790.8,782.9 1803.8,782.9 1819.5,785.5" fill="none" stroke="#eeeeee" stroke-width="1.0"/><polyline points="1819.5,785.5 1822.1,798.6 1818.2,807.8 1816.9,830.0" fill="none" stroke="#eeeeee" stroke-width="1.0"/><polyline points="1832.6,805.1 1845.7,816.9" fill="none" stroke="#eeeeee" stroke-width="1.0"/><polyline points="1849.6,810.4 1850.9,785.5" fill="none" stroke="#eeeeee" stroke-width="1.0"/><polyline points="1762.0,792.1 1775.1,793.4 1785.5,788.1" fill="none" stroke="#eeeeee" stroke-width="1.0"/><polyline points="1699.2,772.4 1712.3,763.3 1720.1,764.6 1728.0,759.4 1735.8,745.0" fill="none" stroke="#eeeeee" stroke-width="1.0"/><polyline points="1728.0,781.6 1728.0,759.4" fill="none" stroke="#eeeeee" stroke-width="1.0"/><polyline points="1738.5,777.7 1738.5,759.4" fill="none" stroke="#eeeeee" stroke-width="1.0"/><polyline points="1785.5,788.1 1782.9,803.8 1771.1,822.1" fill="none" stroke="#eeeeee" stroke-width="1.0"/><polyline points="1768.8,865.3 1785.3,867.1 1799.3,867.9 1809.7,868.8" fill="none" stroke="#eeeeee" stroke-width="1.0"/><polyline points="1769.6,822.6 1781.8,823.5 1783.6,830.5 1789.7,830.5 1790.5,827.0 1795.8,827.8 1796.6,842.7 1801.0,842.7 1801.0,849.6 1795.8,850.5 1795.8,861.8 1799.3,867.9" fill="none" stroke="#eeeeee" stroke-width="1.0"/><polyline points="1816.7,833.1 1827.1,837.4 1831.5,844.4 1847.2,840.9" fill="none" stroke="#eeeeee" stroke-width="1.0"/><polyline points="1827.1,837.4 1830.6,854.9 1832.4,862.7" fill="none" stroke="#eeeeee" stroke-width="1.0"/><polyline points="1809.7,868.8 1818.4,859.2 1825.4,863.6 1824.5,874.0 1820.2,883.6 1813.2,884.5 1809.7,875.8 1805.4,868.8" fill="none" stroke="#eeeeee" stroke-width="1.0"/><polyline points="1792.3,868.8 1789.7,882.7 1788.8,898.4" fill="none" stroke="#eeeeee" stroke-width="1.0"/><polyline points="1816.7,833.1 1814.1,846.1 1818.4,859.2" fill="none" stroke="#eeeeee" stroke-width="1.0"/><polyline points="1828.8,666.8 1845.8,665.4" fill="none" stroke="#eeeeee" stroke-width="1.0"/><polyline points="1840.1,666.8 1837.3,680.9 1828.8,686.6" fill="none" stroke="#eeeeee" stroke-width="1.0"/><polyline points="1837.3,680.9 1859.9,692.3" fill="none" stroke="#eeeeee" stroke-width="1.0"/><polyline points="1845.8,658.3 1855.7,672.4 1861.3,689.4" fill="none" stroke="#eeeeee" stroke-width="1.0"/><polyline points="1871.3,641.3 1881.2,648.4 1891.1,647.0 1902.4,658.3 1905.2,663.9" fill="none" stroke="#eeeeee" stroke-width="1.0"/><polyline points="1867.0,665.4 1878.3,663.9 1892.5,669.6" fill="none" stroke="#eeeeee" stroke-width="1.0"/><polyline points="1892.5,669.6 1898.2,692.3 1915.1,686.6 1919.4,665.4" fill="none" stroke="#eeeeee" stroke-width="1.0"/><polyline points="1936.4,627.1 1929.3,644.1 1919.4,649.8" fill="none" stroke="#eeeeee" stroke-width="1.0"/><polyline points="1852.8,719.2 1878.3,714.9 1888.2,723.4" fill="none" stroke="#eeeeee" stroke-width="1.0"/><polyline points="1994.1,697.0 1999.4,712.7 2007.2,723.1" fill="none" stroke="#eeeeee" stroke-width="1.0"/><polyline points="2004.6,725.8 2011.1,742.8 2015.1,750.6" fill="none" stroke="#eeeeee" stroke-width="1.0"/><polyline points="2013.8,734.9 2025.5,741.5" fill="none" stroke="#eeeeee" stroke-width="1.0"/><polyline points="2020.3,748.0 2032.1,746.7" fill="none" stroke="#eeeeee" stroke-width="1.0"/><polyline points="1791.1,576.0 1795.0,582.4 1799.8,590.4 1794.2,595.9" fill="none" stroke="#eeeeee" stroke-width="1.0"/><path d="M2033.4,926.7L2037.8,915.1L2039.2,899.1L2042.1,886.0L2049.4,880.2L2062.5,875.9L2071.2,868.6L2075.5,861.3L2082.8,855.5L2087.2,855.5L2093.0,855.5L2098.8,846.8L2107.5,846.8L2113.3,848.3L2110.4,857.0L2120.6,867.2L2126.4,858.4L2130.7,843.9L2135.1,855.5L2136.5,874.4L2140.9,881.7L2142.4,893.3L2143.8,900.6L2138.0,910.7L2127.8,922.4L2116.2,934.0L2111.9,936.9L2100.2,939.8L2093.0,938.3L2088.6,932.5L2091.5,923.8L2084.3,926.7L2078.4,918.0L2066.8,918.0L2058.1,922.4L2043.6,925.3Z" fill="#7382f3" stroke="#e6e6e6" stroke-width="0.7" stroke-linejoin="round"/><path d="M2093.0,948.5L2101.7,948.5L2093.0,955.8Z" fill="#7382f3" stroke="#e6e6e6" stroke-width="0.7" stroke-linejoin="round"/><path d="M2171.4,945.6L2180.1,929.6L2183.0,938.3L2171.4,948.5Z" fill="#7382f3" stroke="#e6e6e6" stroke-width="0.7" stroke-linejoin="round"/><path d="M2135.1,964.5L2152.5,954.3L2162.7,950.0L2164.1,952.9L2138.0,965.9Z" fill="#7382f3" stroke="#e6e6e6" stroke-width="0.7" stroke-linejoin="round"/></svg><!--/MAP-->

  <!-- header icons -->
  <svg class="abs" style="left:1880px;top:0" width="560" height="88" viewBox="1880 0 560 88">
   <g fill="none" stroke="#fff" stroke-width="2" stroke-linecap="round" stroke-linejoin="round">
    <path d="M2032 39 L2039 46 L2046 39"/>
    <path d="M2239.5 39 L2246.5 46 L2253.5 39"/>
    <path d="M2373 39 L2380 46 L2387 39"/>
    <path d="M2111.2 46.3 C2113.3 44 2113.6 41.8 2113.6 38.6 C2113.6 33.2 2116.6 29.6 2120.7 29.6 C2124.8 29.6 2127.8 33.2 2127.8 38.6 C2127.8 41.8 2128.1 44 2130.2 46.3 C2131.6 47.8 2131.6 49.5 2129.5 49.5 H2111.9 C2109.8 49.5 2109.8 47.8 2111.2 46.3 Z"/>
    <path d="M2117.2 50.2 A3.5 3.5 0 0 0 2124.2 50.2"/>
   </g>
  </svg>
  <!-- date/filter icons -->
  <svg class="abs" style="left:2010px;top:125px" width="300" height="50" viewBox="2010 125 300 50">
   <g fill="none" stroke="#9aa3b2" stroke-width="1.7" stroke-linecap="round" stroke-linejoin="round">
    <rect x="2024.8" y="140.4" width="26" height="22.4" rx="3"/>
    <path d="M2024.8 146.6 H2050.8"/>
    <path d="M2031.2 137.2 V141.6 M2044.6 137.2 V141.6"/>
   </g>
   <g fill="#9aa3b2">
    <rect x="2036.5" y="150" width="1.7" height="1.7"/><rect x="2040" y="150" width="1.7" height="1.7"/><rect x="2043.5" y="150" width="1.7" height="1.7"/><rect x="2047" y="150" width="1.7" height="1.7"/>
    <rect x="2029.5" y="153.5" width="1.7" height="1.7"/><rect x="2033" y="153.5" width="1.7" height="1.7"/><rect x="2036.5" y="153.5" width="1.7" height="1.7"/><rect x="2040" y="153.5" width="1.7" height="1.7"/><rect x="2043.5" y="153.5" width="1.7" height="1.7"/>
    <rect x="2029.5" y="157" width="1.7" height="1.7"/><rect x="2033" y="157" width="1.7" height="1.7"/><rect x="2036.5" y="157" width="1.7" height="1.7"/><rect x="2040" y="157" width="1.7" height="1.7"/>
   </g>
   <path d="M2190.5 146.5 L2197.3 153.3 L2204.1 146.5" fill="none" stroke="#4b5563" stroke-width="2" stroke-linecap="round" stroke-linejoin="round"/>
   <path d="M2262.2 141.6 H2279.4 L2272.6 150.2 V158.6 H2269 V150.2 Z" fill="none" stroke="#fff" stroke-width="1.8" stroke-linejoin="round"/>
  </svg>
  <!-- table scrollbar -->
  <svg class="abs" style="left:1072px;top:465px" width="26" height="717" viewBox="1072 465 26 717">
   <path d="M1079.4 485.6 L1085 477.6 L1090.6 485.6 Z" fill="#898989" stroke="#898989" stroke-width="2.2" stroke-linejoin="round"/>
   <rect x="1077" y="497" width="16" height="28.7" rx="8" fill="#8a8a8a"/>
   <path d="M1079.4 1162 L1085 1170 L1090.6 1162 Z" fill="#898989" stroke="#898989" stroke-width="2.2" stroke-linejoin="round"/>
  </svg>
  <!-- zoom controls -->
  <div class="abs" style="left:1158px;top:915px;width:40px;height:80px;border:1px solid #dcdcdc;border-radius:3px;background:#fff"></div>
  <div class="abs" style="left:1159px;top:954.5px;width:38px;height:1px;background:#dcdcdc"></div>
  <svg class="abs" style="left:1158px;top:915px" width="40" height="80" viewBox="1158 915 40 80">
   <path d="M1167.4 934.8 H1189 M1178.3 924.2 V945.3 M1167.4 974 H1189" fill="none" stroke="#666" stroke-width="4" stroke-linecap="round"/>
  </svg>
  <!-- legend -->
  <div class="abs" style="left:1608px;top:1023px;width:279px;height:17px;border-radius:3px;background:linear-gradient(90deg,#e0e3fb 0%,#9aa3f4 33%,#5c66f1 66%,#0b1ef1 100%)"></div>
  <div class="abs" style="left:1700px;top:1023px;width:1.6px;height:17px;background:#f4f4f4"></div>
  <div class="abs" style="left:1792.6px;top:1023px;width:1.6px;height:17px;background:#f4f4f4"></div>
  <div class="t leg" style="left:1607px">1</div>
  <div class="t leg" style="left:1691px">1k</div>
  <div class="t leg" style="left:1782px">1M</div>
  <div class="t leg" style="left:1863px">1G</div>
  <!-- demographics -->
  <div class="abs" style="left:451px;top:1205px;width:1943px;height:300px;border:1px solid #e5e7eb;border-radius:10px"></div>
  <div class="t" style="left:486px;top:1241px;font-size:23.6px;font-weight:bold;color:#111827">Demographics</div>
  <div class="t" style="left:486px;top:1277.8px;font-size:19.5px;color:#9ca3af">Demographic data can only be viewed one store at a time. Some stores do not pass demographic data and are therefore hidden.</div>
  <div class="abs" style="left:452px;top:1331px;width:1941px;height:1px;background:#e5e7eb"></div>
  <div class="abs" style="left:661.5px;top:1366px;width:23.5px;height:23.5px;border-radius:50%;background:#55d46a"></div>
  <svg class="abs" style="left:1030px;top:1360px" width="20" height="14" viewBox="1030 1360 20 14"><path d="M1037.6 1372.5 L1040.2 1367.4" stroke="#111" stroke-width="1.8" stroke-linecap="round"/></svg>

  <!-- chat bubble -->
  <div class="abs" style="left:20px;top:1277px;width:67px;height:67px;border-radius:50%;background:#2f6cb4;box-shadow:0 1px 6px rgba(0,0,0,0.35)"></div>
  <!-- chat bubble inner -->
  <svg class="abs" style="left:20px;top:1277px" width="67" height="67" viewBox="20 1277 67 67">
   <path d="M44.8 1293.6 H63 A6 6 0 0 1 69 1299.6 V1327.2 L61.8 1322.4 H44.8 A6 6 0 0 1 38.8 1316.4 V1299.6 A6 6 0 0 1 44.8 1293.6 Z" fill="#fff"/>
   <path d="M41.8 1313.6 Q53.6 1320.6 65.4 1313.6" fill="none" stroke="#2f6cb4" stroke-width="1.8" stroke-linecap="round"/>
  </svg>

</div>
<!-- scrollbar -->
<div class="abs" style="left:2450px;top:0;width:25px;height:1372px;background:#2b2b2b;border-top-right-radius:10px;border-bottom-right-radius:10px"></div>
<div class="abs" style="left:2455px;top:30px;width:16px;height:1219px;background:#a0a0a0;border-radius:8px"></div>
<svg class="abs" style="left:2450px;top:0" width="25" height="1372" viewBox="2450 0 25 1372"><path d="M2463 9.6 L2469.4 18.4 H2456.6 Z M2456.4 1352.6 H2469.6 L2463 1361 Z" fill="#a0a0a0" stroke="#a0a0a0" stroke-width="1.6" stroke-linejoin="round"/></svg>
</body></html>
